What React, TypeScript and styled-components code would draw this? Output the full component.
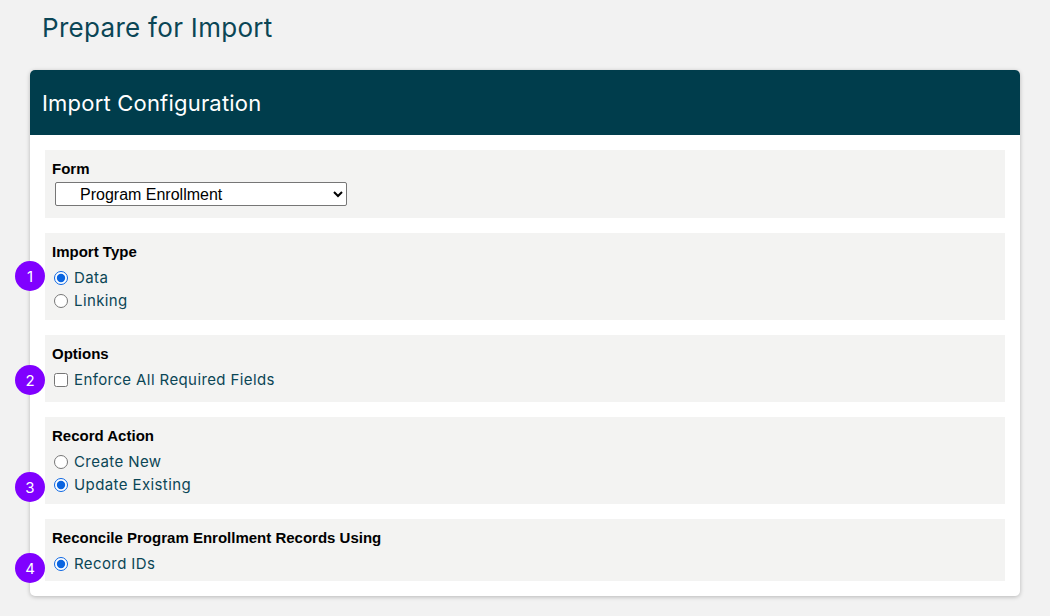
import React from "react";
import styled, { createGlobalStyle } from "styled-components";

const Global = createGlobalStyle`
  body { margin: 0; background: #f2f2f2; font-family: Inter, "Open Sans", sans-serif; }
`;
const Page = styled.div`padding: 12px 30px 16px 30px;`;
const Title = styled.h1`
  margin: 0 0 26px 12px; font-weight: 400; font-size: 26px; line-height: 32px; color: #0b4656; letter-spacing: 0.3px;
`;
const Card = styled.div`
  background: #fff; border-radius: 5px; box-shadow: 0 1px 4px rgba(0,0,0,0.25); overflow: visible; padding-bottom: 15px;
`;
const Header = styled.div`
  background: #003d4c; color: #fff; height: 65px; display: flex; align-items: center; padding-left: 12px;
  border-radius: 5px 5px 0 0; font-size: 22px; letter-spacing: 0.2px;
`;
const Body = styled.div`display: flex; flex-direction: column; gap: 15px; padding: 15px 15px 0 15px;`;
const Section = styled.div`
  position: relative; background: #f3f3f2; padding: 10px 7px 8px 7px;
`;
const Label = styled.div`
  font-family: "Liberation Sans", Arial, sans-serif; font-weight: 700; font-size: 15px; color: #000; margin-bottom: 6px;
`;
const Select = styled.select`
  width: 292px; height: 24px; margin-left: 3px; font-family: "Liberation Sans", Arial, sans-serif; font-size: 16px;
  padding-left: 20px; border: 1px solid #767676; border-radius: 2px; background: #fff; color: #000;
`;
const Option = styled.label`
  display: flex; align-items: center; gap: 4px; height: 23px; margin-left: 2px; font-size: 15px; color: #0b4656; letter-spacing: 0.4px;
  input { margin: 0 2px 0 0; width: 14px; height: 14px; accent-color: #0a64e0; }
`;
const Badge = styled.div<{ $top: number }>`
  position: absolute; left: -30px; top: ${p => p.$top}px; width: 30px; height: 30px; border-radius: 50%;
  background: #8000ff; color: #fff; font-size: 15px; display: flex; align-items: center; justify-content: center;
`;

export default function App() {
  return (
    <>
      <Global />
      <Page>
        <Title>Prepare for Import</Title>
        <Card>
          <Header>Import Configuration</Header>
          <Body>
            <Section style={{ paddingBottom: 12 }}>
              <Label style={{ marginBottom: 5 }}>Form</Label>
              <Select defaultValue="pe"><option value="pe">Program Enrollment</option></Select>
            </Section>
            <Section>
              <Badge $top={28}>1</Badge>
              <Label>Import Type</Label>
              <Option><input type="radio" name="t" defaultChecked />Data</Option>
              <Option><input type="radio" name="t" />Linking</Option>
            </Section>
            <Section style={{ paddingBottom: 11 }}>
              <Badge $top={30}>2</Badge>
              <Label>Options</Label>
              <Option><input type="checkbox" />Enforce All Required Fields</Option>
            </Section>
            <Section>
              <Badge $top={55}>3</Badge>
              <Label>Record Action</Label>
              <Option><input type="radio" name="a" />Create New</Option>
              <Option><input type="radio" name="a" defaultChecked />Update Existing</Option>
            </Section>
            <Section style={{ paddingBottom: 6 }}>
              <Badge $top={34}>4</Badge>
              <Label>Reconcile Program Enrollment Records Using</Label>
              <Option><input type="radio" name="r" defaultChecked />Record IDs</Option>
            </Section>
          </Body>
        </Card>
      </Page>
    </>
  );
}
